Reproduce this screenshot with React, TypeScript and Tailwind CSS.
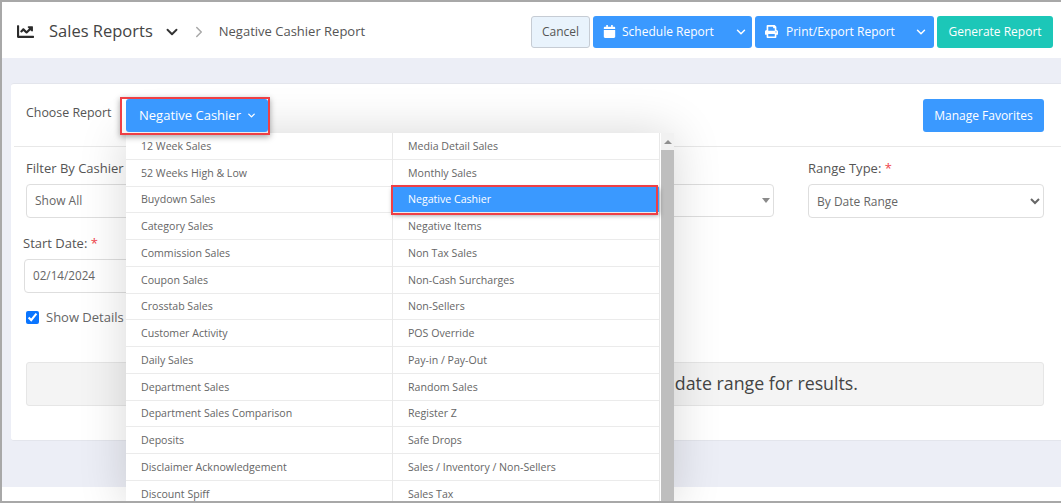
import { ChevronDown, ChevronRight } from "lucide-react"
import { FaCalendar, FaChartLine, FaPrint } from "react-icons/fa"

const leftItems = [
  "12 Week Sales",
  "52 Weeks High & Low",
  "Buydown Sales",
  "Category Sales",
  "Commission Sales",
  "Coupon Sales",
  "Crosstab Sales",
  "Customer Activity",
  "Daily Sales",
  "Department Sales",
  "Department Sales Comparison",
  "Deposits",
  "Disclaimer Acknowledgement",
  "Discount Spiff",
]

const rightItems = [
  "Media Detail Sales",
  "Monthly Sales",
  "Negative Cashier",
  "Negative Items",
  "Non Tax Sales",
  "Non-Cash Surcharges",
  "Non-Sellers",
  "POS Override",
  "Pay-in / Pay-Out",
  "Random Sales",
  "Register Z",
  "Safe Drops",
  "Sales / Inventory / Non-Sellers",
  "Sales Tax",
]

const MenuColumn = ({ items, active }: { items: string[]; active?: string }) => (
  <div className="w-[267px] border-r border-[#e8e8e8]">
    {items.map((item) => (
      <div
        key={item}
        className={`relative flex h-[26.75px] items-center border-b border-[#ebebeb] pl-[15px] pt-[2px] text-[10.6px] ${
          item === active
            ? "bg-[#3a99ff] text-white shadow-[0_2px_5px_rgba(0,0,0,0.45)]"
            : "text-[#666]"
        }`}
      >
        {item}
        {item === active && (
          <div className="absolute -left-[2px] -top-[2px] h-[30px] w-[267px] border-2 border-[#ef3f45]" />
        )}
      </div>
    ))}
  </div>
)

const SplitButton = ({
  icon,
  label,
  className,
  labelGap,
}: {
  icon: React.ReactNode
  label: string
  className: string
  labelGap: string
}) => (
  <button
    className={`flex h-[32px] items-center justify-between rounded-[3px] bg-[#3a99ff] pl-[10px] text-[12px] text-white ${className}`}
  >
    <span className={`flex items-center ${labelGap}`}>
      {icon}
      {label}
    </span>
    <ChevronDown size={14} strokeWidth={2.5} />
  </button>
)

export default function App() {
  return (
    <div className="relative h-[503px] w-[1061px] overflow-hidden border-y-2 border-l-2 border-[#a8a8a8] bg-white font-['Open_Sans',sans-serif]">
      {/* top bar */}
      <div className="flex h-[56px] items-center justify-between pl-[15px] pr-[8px] pt-[3px]">
        <div className="flex items-center text-[#444]">
          <FaChartLine size={17} className="text-[#2b2b2b]" />
          <span className="ml-[15px] text-[16.5px] text-[#444]">Sales Reports</span>
          <ChevronDown size={18} strokeWidth={2.5} className="ml-[10px] text-[#333]" />
          <ChevronRight size={18} strokeWidth={2} className="ml-[9px] text-[#a8a8a8]" />
          <span className="ml-[11px] text-[13px] text-[#555]">Negative Cashier Report</span>
        </div>
        <div className="flex items-center gap-[3px]">
          <button className="h-[32px] w-[59px] rounded-[3px] border border-[#c6ccd4] bg-[#e9f3fc] text-[12px] text-[#555]">
            Cancel
          </button>
          <SplitButton
            icon={<FaCalendar size={13} />}
            label="Schedule Report"
            className="w-[159px] pr-[4px]"
            labelGap="gap-[6px]"
          />
          <SplitButton
            icon={<FaPrint size={13} />}
            label="Print/Export Report"
            className="w-[179px] pr-[6px]"
            labelGap="gap-[8px]"
          />
          <button className="h-[32px] w-[116px] rounded-[3px] bg-[#1cc7b8] text-[12px] text-white">
            Generate Report
          </button>
        </div>
      </div>

      {/* page body */}
      <div className="bg-[#eceef6] pb-[46px] pl-[9px] pt-[25px]">
        <div className="h-[358px] rounded-l-[3px] border-y border-[#e3e5ec] bg-white">
          <div className="ml-[3px] flex h-[63px] items-start justify-between border-b border-[#e8e8e8] pl-[12px] pr-[17px] pt-[15px]">
            <span className="mt-[5px] text-[12.4px] text-[#555]">Choose Report</span>
            <button className="h-[33px] w-[121px] rounded-[3px] bg-[#3a99ff] text-[12px] text-white">
              Manage Favorites
            </button>
          </div>

          <div className="pl-[15px] pr-[17px] pt-[12px]">
            <div className="flex gap-[34px]">
              <div className="w-[240px]">
                <div className="h-[25px] text-[13px] font-medium leading-[18px] text-[#555]">Filter By Cashier</div>
                <div className="flex h-[34px] items-center rounded-[4px] border border-[#dedede] pl-[8px] text-[12px] text-[#666]">
                  Show All
                </div>
              </div>
              <div className="flex-1 pt-[25px]">
                <div className="flex h-[33px] items-center justify-end rounded-[4px] border border-[#dedede] pr-[3px]">
                  <div className="h-0 w-0 border-x-[4px] border-t-[5px] border-x-transparent border-t-[#8a8a8a]" />
                </div>
              </div>
              <div className="w-[236px]">
                <div className="h-[25px] text-[13px] font-medium leading-[18px] text-[#555]">
                  Range Type: <span className="text-[#f0444c]">*</span>
                </div>
                <select className="h-[34px] w-full rounded-[4px] border border-[#dedede] bg-white pl-[4px] text-[12px] text-[#666]">
                  <option>By Date Range</option>
                </select>
              </div>
            </div>

            <div className="-ml-[3px] mt-[16px]">
              <div className="h-[25px] text-[13px] font-medium text-[#555]">
                Start Date: <span className="text-[#f0444c]">*</span>
              </div>
              <div className="ml-[1px] flex h-[34px] w-[200px] items-center rounded-[4px] border border-[#dedede] pl-[8px] text-[11.7px] text-[#666]">
                02/14/2024
              </div>
            </div>

            <label className="mt-[15px] flex items-center gap-[7px] text-[13px] text-[#666]">
              <input type="checkbox" defaultChecked className="h-[13px] w-[13px] accent-[#0a75ff]" />
              Show Details
            </label>

            <div className="mt-[34px] flex h-[44px] items-center justify-end rounded-[3px] border border-[#e6e6e6] bg-[#f4f4f4] pr-[185px] text-[17.8px] text-[#444]">
              date range for results.
            </div>
          </div>
        </div>
      </div>

      {/* trigger button and open report menu */}
      <div className="absolute left-[118px] top-[95px] z-20 border-2 border-[#ef3f45] pb-[1px] pl-[4px] shadow-[0_2px_6px_rgba(0,0,0,0.35)]">
        <button className="flex h-[33px] w-[142px] items-center justify-center gap-[5px] rounded-[3px] bg-[#3a99ff] pl-[2px] text-[13px] text-white">
          Negative Cashier
          <ChevronDown size={11} strokeWidth={3} />
        </button>
      </div>
      <div className="absolute left-[124px] top-[131px] z-10 flex h-[372px] w-[548px] bg-white shadow-[0_0_45px_rgba(0,0,0,0.16)]">
        <MenuColumn items={leftItems} />
        <MenuColumn items={rightItems} active="Negative Cashier" />
        <div className="ml-[1px] flex w-[13px] flex-col bg-[#f1f1f1]">
          <div className="flex h-[17px] items-center justify-center">
            <div className="h-0 w-0 border-x-[4px] border-b-[4px] border-x-transparent border-b-[#8f8f8f]" />
          </div>
          <div className="flex-1 bg-[#bebebe]" />
        </div>
      </div>
    </div>
  )
}
